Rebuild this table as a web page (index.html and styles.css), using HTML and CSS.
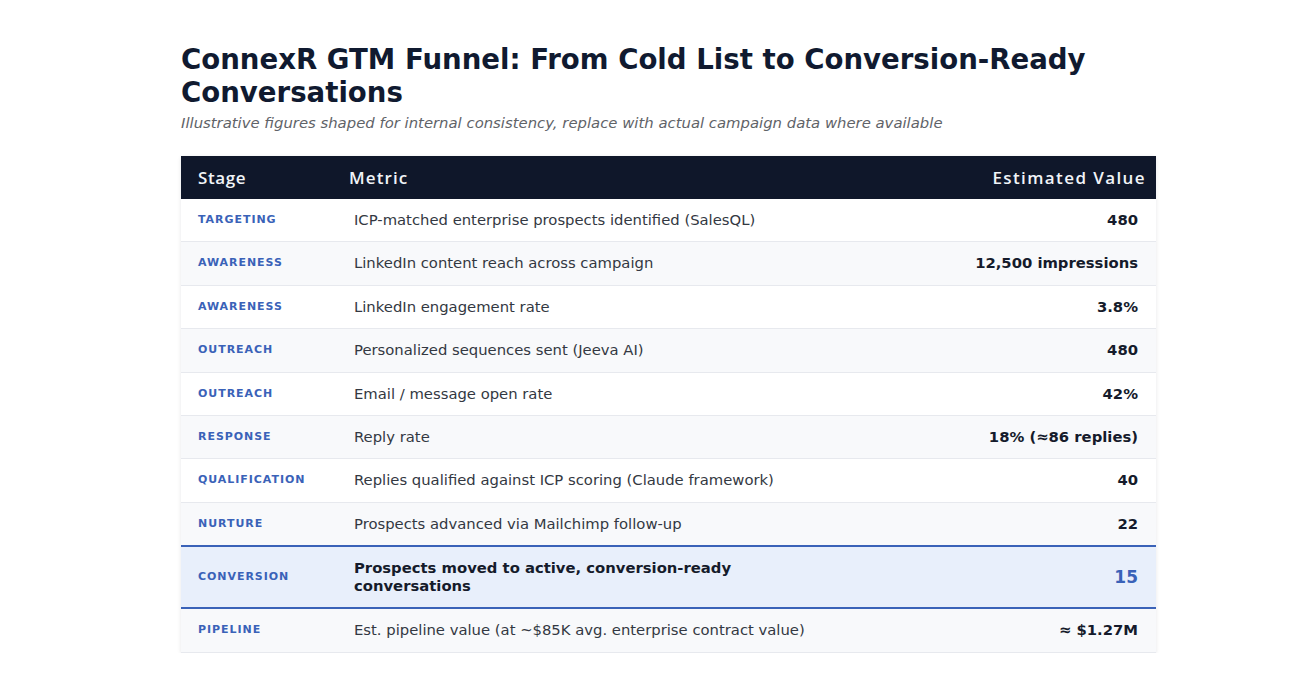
FILE: index.html
```html
<!DOCTYPE html>
<html lang="en">
<head>
<meta charset="utf-8">
<title>ConnexR GTM Funnel</title>
<link rel="stylesheet" href="styles.css">
</head>
<body>
<main class="page">
  <h1 class="title">ConnexR GTM Funnel: From Cold List to Conversion-Ready Conversations</h1>
  <p class="subtitle">Illustrative figures shaped for internal consistency, replace with actual campaign data where available</p>
  <table class="funnel">
    <colgroup>
      <col class="col-stage">
      <col class="col-metric">
      <col class="col-value">
    </colgroup>
    <thead>
      <tr>
        <th class="th-stage">Stage</th>
        <th class="th-metric">Metric</th>
        <th class="th-value">Estimated Value</th>
      </tr>
    </thead>
    <tbody>
      <tr><td class="stage">Targeting</td><td class="metric">ICP-matched enterprise prospects identified (SalesQL)</td><td class="value">480</td></tr>
      <tr><td class="stage">Awareness</td><td class="metric">LinkedIn content reach across campaign</td><td class="value">12,500 impressions</td></tr>
      <tr><td class="stage">Awareness</td><td class="metric">LinkedIn engagement rate</td><td class="value">3.8%</td></tr>
      <tr><td class="stage">Outreach</td><td class="metric">Personalized sequences sent (Jeeva AI)</td><td class="value">480</td></tr>
      <tr><td class="stage">Outreach</td><td class="metric">Email / message open rate</td><td class="value">42%</td></tr>
      <tr><td class="stage">Response</td><td class="metric">Reply rate</td><td class="value">18% (≈86 replies)</td></tr>
      <tr><td class="stage">Qualification</td><td class="metric">Replies qualified against ICP scoring (Claude framework)</td><td class="value">40</td></tr>
      <tr><td class="stage">Nurture</td><td class="metric">Prospects advanced via Mailchimp follow-up</td><td class="value">22</td></tr>
      <tr class="highlight"><td class="stage">Conversion</td><td class="metric">Prospects moved to active, conversion-ready conversations</td><td class="value">15</td></tr>
      <tr><td class="stage">Pipeline</td><td class="metric">Est. pipeline value (at ~$85K avg. enterprise contract value)</td><td class="value">≈ $1.27M</td></tr>
    </tbody>
  </table>
</main>
</body>
</html>
```

FILE: styles.css
```css
html, body {
  margin: 0;
  padding: 0;
  background: #ffffff;
}

body {
  font-family: "DejaVu Sans", "Liberation Sans", sans-serif;
  color: #1f2937;
}

.page {
  width: 975px;
  margin-left: 181px;
  padding-top: 43px;
}

.title {
  margin: 0;
  font-size: 27.6px;
  line-height: 33px;
  font-weight: 700;
  color: #101a30;
}

.subtitle {
  margin: 4px 0 0;
  font-size: 14.85px;
  line-height: 20px;
  font-style: italic;
  color: #5f6368;
}

.funnel {
  margin-top: 23px;
  width: 975px;
  table-layout: fixed;
  border-collapse: collapse;
  box-shadow: 0 1px 4px rgba(15, 23, 42, 0.10);
}

.col-stage { width: 156px; }
.col-metric { width: 500px; }

.funnel thead tr {
  background: #0f172a;
}

.funnel th {
  font-family: "Open Sans", "Noto Sans", sans-serif;
  font-weight: 600;
  font-size: 17px;
  letter-spacing: 1.1px;
  line-height: 22px;
  color: #f1f4f8;
  padding: 10.5px 12px;
  text-align: left;
}

.funnel th.th-stage { padding-left: 17px; letter-spacing: 0.6px; }
.funnel th.th-value { text-align: right; padding-right: 10px; letter-spacing: 1.4px; }

.funnel td {
  padding: 12px 17px;
  line-height: 18.4px;
  font-size: 14.8px;
  border-bottom: 1px solid #e7e9ee;
  vertical-align: middle;
}

.funnel tbody tr:nth-child(odd) { background: #ffffff; }
.funnel tbody tr:nth-child(even) { background: #f8f9fb; }

.funnel td.stage {
  font-size: 11px;
  font-weight: 700;
  letter-spacing: 0.95px;
  text-transform: uppercase;
  color: #3a62b8;
}

.metric {
  color: #333842;
}

.funnel td.value {
  text-align: right;
  font-weight: 700;
  color: #151b2b;
  padding-right: 18px;
}

.funnel tbody tr.highlight {
  background: #e8effb;
}

.funnel .highlight td {
  border-top: 2px solid #3a62b8;
  border-bottom: 2px solid #3a62b8;
  padding-top: 12px;
  padding-bottom: 12px;
}

.highlight .metric {
  font-weight: 700;
  color: #151b2b;
  line-height: 18px;
}

.funnel .highlight td.value {
  font-size: 17px;
  color: #3a62b8;
}
```
